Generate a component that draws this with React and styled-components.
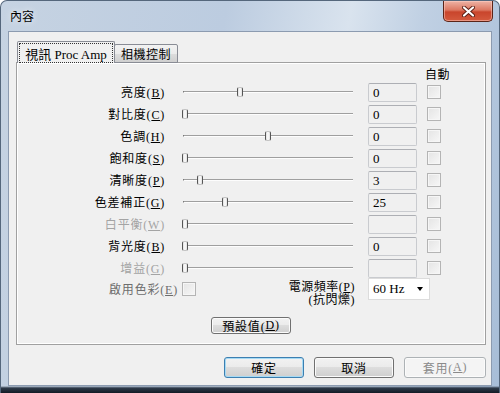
import React from 'react';
import styled, { createGlobalStyle } from 'styled-components';

const GlobalStyle = createGlobalStyle`
  html, body {
    margin: 0;
    padding: 0;
  }
  body {
    width: 500px;
    height: 393px;
    overflow: hidden;
    background: #fff;
  }
`;

const UI_FONT = '"Liberation Serif", "Noto Sans CJK TC", serif';
const CJK_FONT = '"Noto Sans CJK TC", "Liberation Sans", sans-serif';

const Window = styled.div`
  width: 500px;
  height: 393px;
  box-sizing: border-box;
  display: flex;
  flex-direction: column;
  padding: 0 7px 7px;
  border: 1px solid #55677c;
  border-bottom: none;
  border-radius: 7px 7px 0 0;
  background:
    linear-gradient(to top, #131b25 0, #2e3a49 5px, rgba(0, 0, 0, 0) 7px),
    linear-gradient(100deg, #c6d3e2 0%, #bccce0 40%, #d9e3ee 62%, #c0d0e3 75%, #a7bdd7 100%);
  font-family: ${UI_FONT};
  font-size: 12px;
  color: #000;
`;

const TitleBar = styled.div`
  height: 30px;
  flex: none;
  display: flex;
  justify-content: space-between;
  align-items: flex-start;
`;

const Title = styled.div`
  font-family: ${CJK_FONT};
  font-size: 12px;
  line-height: 14px;
  padding: 8px 0 0 2px;
  text-shadow: 0 0 6px rgba(255, 255, 255, 0.9);
`;

const CloseButton = styled.div`
  width: 50px;
  height: 21px;
  margin-right: -1px;
  box-sizing: border-box;
  border: 1px solid #5b2418;
  border-top: none;
  border-radius: 0 0 5px 5px;
  background: linear-gradient(#eeb3a6 0%, #dc7862 45%, #c9452c 55%, #d45a3e 100%);
  box-shadow: inset 0 0 0 1px rgba(255, 210, 200, 0.5);
  display: flex;
  align-items: center;
  justify-content: center;
`;

const Client = styled.div`
  flex: 1;
  background: #f0f0f0;
  border: 1px solid #8c9bb0;
  padding: 9px 5px 0 7px;
  display: flex;
  flex-direction: column;
`;

const TabStrip = styled.div`
  display: flex;
  align-items: flex-end;
  padding-left: 1px;
  margin-bottom: -1px;
  position: relative;
  z-index: 1;
`;

const Tab = styled.div`
  box-sizing: border-box;
  width: ${p => p.$width}px;
  height: ${p => (p.$active ? 22 : 19)}px;
  margin-left: ${p => (p.$active ? 0 : -1)}px;
  border: 1px solid #898c95;
  border-bottom: ${p => (p.$active ? 'none' : '1px solid #898c95')};
  border-radius: 2px 2px 0 0;
  background: ${p => (p.$active
    ? '#f0f0f0'
    : 'linear-gradient(#f2f2f2 0%, #ebebeb 50%, #dddddd 51%, #cfcfcf 100%)')};
  display: flex;
  align-items: ${p => (p.$active ? 'stretch' : 'center')};
  justify-content: center;
  padding: ${p => (p.$active ? '1px 1px 0' : '0')};
  letter-spacing: 0.5px;
  white-space: nowrap;
`;

const FocusLabel = styled.div`
  flex: 1;
  border: 1px dotted #333;
  display: flex;
  align-items: center;
  justify-content: center;
  font-size: 13px;
  letter-spacing: 0;
`;

const Panel = styled.div`
  height: 283px;
  flex: none;
  box-sizing: border-box;
  border: 1px solid #a0a0a0;
  box-shadow: inset 1px 1px 0 #fff, inset -1px -1px 0 #fff;
  padding-top: 3px;
  display: flex;
  flex-direction: column;
`;

const HeaderRow = styled.div`
  height: 15px;
  line-height: 15px;
  display: flex;
  justify-content: flex-end;
  padding-right: 35px;
  letter-spacing: 0.5px;
  font-family: ${CJK_FONT};
`;

const Row = styled.div`
  height: 22px;
  display: flex;
  align-items: center;
`;

const Label = styled.div`
  width: 148px;
  margin-right: 18px;
  flex: none;
  text-align: right;
  white-space: nowrap;
  letter-spacing: 0.8px;
  color: ${p => (p.$disabled ? '#a4a4a4' : '#000')};
`;

const Slider = styled.div`
  position: relative;
  width: 170px;
  height: 22px;
  flex: none;
  display: flex;
  align-items: center;
`;

const Track = styled.div`
  width: 100%;
  height: 1px;
  background: #9f9f9f;
  border-bottom: 1px solid #fdfdfd;
  border-left: 1px solid #7a7a7a;
`;

const Thumb = styled.div`
  position: absolute;
  top: 6px;
  width: 6px;
  height: 10px;
  box-sizing: border-box;
  border: 1px solid #c4c4c4;
  border-left-color: #555;
  border-right-color: #555;
  border-radius: 2px;
  background: linear-gradient(90deg, #e0e0e0, #fdfdfd 50%, #e0e0e0);
`;

const Edit = styled.div`
  width: 49px;
  height: 19px;
  margin-left: 15px;
  flex: none;
  box-sizing: border-box;
  border: 1px solid #c9cbcf;
  border-top-color: #adafb4;
  border-radius: 2px;
  background: #f0f0f0;
  padding-left: 4px;
  line-height: 17px;
  font-size: 13px;
`;

const Check = styled.div`
  width: 14px;
  height: 14px;
  margin-left: ${p => p.$gap}px;
  flex: none;
  box-sizing: border-box;
  border: 1px solid #b4b4b4;
  background: linear-gradient(135deg, #e4e4e4, #f7f7f7);
  box-shadow: inset 0 0 0 1px #f6f6f6;
`;

const BottomRow = styled.div`
  height: 22px;
  margin-top: -1px;
  display: flex;
  align-items: center;
`;

const EnableLabel = styled.div`
  width: 165px;
  padding-right: 4px;
  box-sizing: border-box;
  text-align: right;
  letter-spacing: 0.8px;
  color: #6d6d6d;
  white-space: nowrap;
`;

const PowerLabel = styled.div`
  width: 159px;
  flex: none;
  align-self: flex-start;
  margin-top: 3px;
  text-align: right;
  line-height: 13px;
  letter-spacing: 0.5px;
  white-space: nowrap;
`;

const Combo = styled.div`
  width: 62px;
  height: 22px;
  margin-left: 13px;
  flex: none;
  box-sizing: border-box;
  border: 1px solid #dcdcdc;
  background: #fff;
  display: flex;
  align-items: center;
  justify-content: space-between;
  padding: 0 6px 0 4px;
  font-size: 13px;
`;

const Arrow = styled.span`
  width: 0;
  height: 0;
  border-top: 4px solid #000;
  border-left: 3.5px solid transparent;
  border-right: 3.5px solid transparent;
`;

const Button = styled.div`
  width: ${p => p.$width}px;
  height: ${p => p.$height}px;
  box-sizing: border-box;
  border: 1px solid ${p => (p.$primary ? '#3c7fb1' : p.$disabled ? '#adb2b5' : '#707070')};
  border-radius: 3px;
  background: ${p => (p.$disabled
    ? '#f4f4f4'
    : 'linear-gradient(#f2f2f2 0%, #ebebeb 49%, #dddddd 50%, #cfcfcf 100%)')};
  box-shadow: inset 0 0 0 1px ${p => (p.$primary ? '#a6daf4' : '#fbfbfb')};
  color: ${p => (p.$disabled ? '#8a8a8a' : '#000')};
  display: flex;
  align-items: center;
  justify-content: center;
  letter-spacing: 0.8px;
  white-space: nowrap;
`;

const DefaultsWrap = styled.div`
  display: flex;
  justify-content: center;
  margin-top: 17px;
`;

const Footer = styled.div`
  display: flex;
  justify-content: flex-end;
  gap: 10px;
  margin-top: 12px;
`;

const rows = [
  { label: '亮度', key: 'B', value: '0', pos: 54 },
  { label: '對比度', key: 'C', value: '0', pos: -1 },
  { label: '色調', key: 'H', value: '0', pos: 82 },
  { label: '飽和度', key: 'S', value: '0', pos: -1 },
  { label: '清晰度', key: 'P', value: '3', pos: 14 },
  { label: '色差補正', key: 'G', value: '25', pos: 39 },
  { label: '白平衡', key: 'W', value: '', pos: -1, disabled: true },
  { label: '背光度', key: 'B', value: '0', pos: -1 },
  { label: '增益', key: 'G', value: '', pos: -1, disabled: true },
];

const CloseGlyph = () => (
  <svg width="13" height="11" viewBox="0 0 13 11">
    <path d="M2 1.5 L11 9.5 M11 1.5 L2 9.5" stroke="#5a1e14" strokeWidth="4" strokeLinecap="round" />
    <path d="M2 1.5 L11 9.5 M11 1.5 L2 9.5" stroke="#fff" strokeWidth="2.2" strokeLinecap="round" />
  </svg>
);

const App = () => (
  <>
    <GlobalStyle />
    <Window>
      <TitleBar>
        <Title>內容</Title>
        <CloseButton>
          <CloseGlyph />
        </CloseButton>
      </TitleBar>
      <Client>
        <TabStrip>
          <Tab $active $width={98}>
            <FocusLabel>視訊 Proc Amp</FocusLabel>
          </Tab>
          <Tab $width={64}>相機控制</Tab>
        </TabStrip>
        <Panel>
          <HeaderRow>自動</HeaderRow>
          {rows.map((row, i) => (
            <Row key={i}>
              <Label $disabled={row.disabled}>
                {row.label}(<u>{row.key}</u>)
              </Label>
              <Slider>
                <Track />
                <Thumb style={{ left: row.pos }} />
              </Slider>
              <Edit>{row.value}</Edit>
              <Check $gap={10} />
            </Row>
          ))}
          <BottomRow>
            <EnableLabel>
              啟用色彩(<u>E</u>)
            </EnableLabel>
            <Check $gap={0} />
            <PowerLabel>
              電源頻率(<u>P</u>)
              <br />
              (抗閃爍)
            </PowerLabel>
            <Combo>
              <span>60 Hz</span>
              <Arrow />
            </Combo>
          </BottomRow>
          <DefaultsWrap>
            <Button $width={80} $height={17}>
              預設值(<u>D</u>)
            </Button>
          </DefaultsWrap>
        </Panel>
        <Footer>
          <Button $width={80} $height={21} $primary>確定</Button>
          <Button $width={80} $height={21}>取消</Button>
          <Button $width={82} $height={21} $disabled>
            套用(<u>A</u>)
          </Button>
        </Footer>
      </Client>
    </Window>
  </>
);

export default App;
